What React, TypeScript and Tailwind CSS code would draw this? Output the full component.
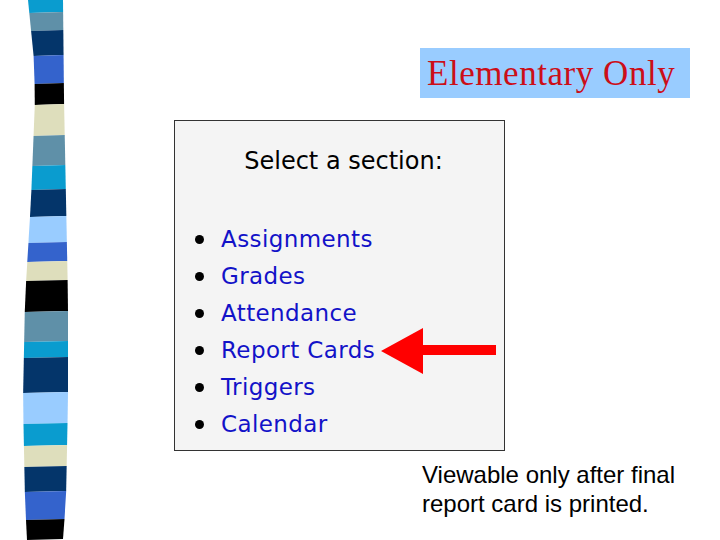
const STRIPES: [number, number, string][] = [
  [0, 13, '#0a9ccf'],
  [13, 31, '#5f90a8'],
  [31, 56, '#04356a'],
  [56, 84, '#3463cc'],
  [84, 105, '#000000'],
  [105, 136, '#dedebc'],
  [136, 166, '#5f90a8'],
  [166, 190, '#0a9ccf'],
  [190, 217, '#04356a'],
  [217, 243, '#99ccff'],
  [243, 262, '#3463cc'],
  [262, 281, '#dedebc'],
  [281, 312, '#000000'],
  [312, 342, '#5f90a8'],
  [342, 358, '#0a9ccf'],
  [358, 393, '#04356a'],
  [393, 424, '#99ccff'],
  [424, 446, '#0a9ccf'],
  [446, 467, '#dedebc'],
  [467, 492, '#04356a'],
  [492, 520, '#3463cc'],
  [520, 540, '#000000'],
];

const SECTIONS = ['Assignments', 'Grades', 'Attendance', 'Report Cards', 'Triggers', 'Calendar'];

// left / right edge of the curved band
const lerp = (pts: [number, number][], y: number) => {
  for (let i = 0; i < pts.length - 1; i++) {
    const [y0, x0] = pts[i];
    const [y1, x1] = pts[i + 1];
    if (y >= y0 && y <= y1) return x0 + ((y - y0) / (y1 - y0)) * (x1 - x0);
  }
  return pts[pts.length - 1][1];
};
const LEFT: [number, number][] = [[0, 28], [60, 34], [100, 35], [150, 33], [200, 31], [250, 28], [300, 25], [400, 23], [450, 24], [500, 25], [540, 27]];
const RIGHT: [number, number][] = [[0, 63], [100, 64], [200, 66], [300, 68], [400, 68], [500, 66], [540, 63]];

function Stripe() {
  return (
    <svg width="80" height="540" viewBox="0 0 80 540" className="shrink-0">
      {STRIPES.map(([a, b, c]) => (
        <polygon
          key={a}
          fill={c}
          points={`${lerp(LEFT, a)},${a} ${lerp(RIGHT, a)},${a - 1} ${lerp(RIGHT, b)},${b - 1} ${lerp(LEFT, b)},${b}`}
        />
      ))}
    </svg>
  );
}

function Arrow() {
  return (
    <svg width="118" height="48" viewBox="0 0 118 48" className="shrink-0">
      <polygon fill="#ff0000" points="0,24 42,1 42,18 115,18 115,28 42,28 42,47" />
    </svg>
  );
}

export default function App() {
  return (
    <div className="w-[720px] h-[540px] bg-white flex overflow-hidden">
      <Stripe />
      <div className="flex flex-col">
        {/* title */}
        <div className="ml-[340px] mt-[48px] w-[270px] h-[50px] bg-[#99ccff] flex items-center pl-[7px]">
          <span className="text-[35px] text-[#cc0e18] leading-none font-['Liberation_Serif',serif] tracking-[0.55px]">
            Elementary Only
          </span>
        </div>

        {/* screenshot of the menu */}
        <div className="ml-[94px] mt-[22px] w-[331px] h-[331px] border border-[#333] bg-[#f4f4f4] font-['DejaVu_Sans',sans-serif]">
          <div className="text-center text-[24px] text-black pt-[25px] pl-[8px] leading-[30px]">Select a section:</div>
          <ul className="mt-[45px] flex flex-col">
            {SECTIONS.map((s) => (
              <li key={s} className="flex items-center h-[37px]">
                <span className="w-[9px] h-[9px] rounded-full bg-black ml-[20px] mr-[17px]" />
                <span className="text-[23px] text-[#1212c8] tracking-[0.4px]">{s}</span>
                {s === 'Report Cards' && <span className="ml-[6px] flex"><Arrow /></span>}
              </li>
            ))}
          </ul>
        </div>

        {/* caption */}
        <div className="ml-[342px] mt-[9px] text-[24px] leading-[29px] text-black font-['Liberation_Sans',sans-serif]">
          Viewable only after final
          <br />
          report card is printed.
        </div>
      </div>
    </div>
  );
}
